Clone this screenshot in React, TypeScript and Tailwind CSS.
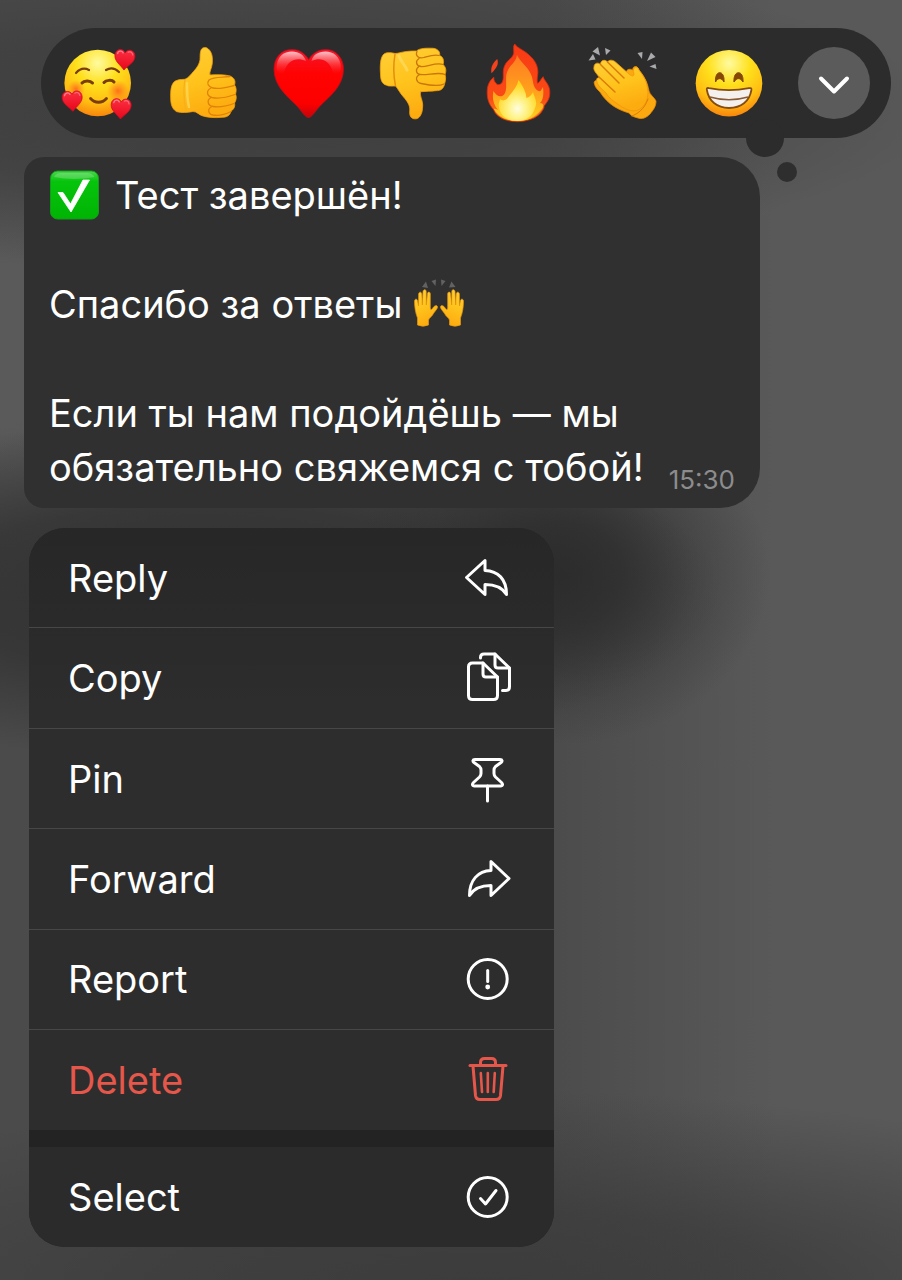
import { useState } from "react";
import type { ReactNode } from "react";
import clsx from "clsx";

const SmallHeart = ({ x, y, rotate = 0 }: { x: number; y: number; rotate?: number }) => (
  <g transform={`translate(${x} ${y}) rotate(${rotate})`}>
    <path
      d="M0 -6C-2 -11 -10 -10 -10 -3C-10 3 -4 6 0 11C4 6 10 3 10 -3C10 -10 2 -11 0 -6Z"
      fill="url(#smallHeart)"
      stroke="#d00c22"
      strokeWidth="0.8"
    />
    <path d="M-7.500 -5C-7 -8 -3.500 -8.500 -2 -6" fill="none" stroke="#ff7f8c" strokeWidth="1.300" strokeLinecap="round" />
    <path d="M3 -7C5 -8.500 7.500 -7 7.800 -4.500" fill="none" stroke="#ff6f7e" strokeWidth="1.100" strokeLinecap="round" />
  </g>
);

// Gradients shared by all the emoji drawings
const EmojiDefs = () => (
  <svg className="absolute size-0" aria-hidden="true">
    <defs>
      <radialGradient id="face" cx="0.5" cy="0.2" r="0.8">
        <stop offset="0" stopColor="#fffba0" />
        <stop offset="0.4" stopColor="#ffe01c" />
        <stop offset="0.75" stopColor="#ffbd12" />
        <stop offset="1" stopColor="#f9850c" />
      </radialGradient>
      <radialGradient id="blush">
        <stop offset="0" stopColor="#ff5a1c" stopOpacity="0.8" />
        <stop offset="1" stopColor="#ff7a1c" stopOpacity="0" />
      </radialGradient>
      <linearGradient id="smallHeart" x1="0" y1="0" x2="0" y2="1">
        <stop offset="0" stopColor="#fb2f42" />
        <stop offset="1" stopColor="#e8061a" />
      </linearGradient>
      <linearGradient id="skin" x1="0" y1="0" x2="0.3" y2="1">
        <stop offset="0" stopColor="#ffcf38" />
        <stop offset="0.55" stopColor="#ffc31c" />
        <stop offset="1" stopColor="#fdac10" />
      </linearGradient>
      <linearGradient id="heart" x1="0" y1="0" x2="0" y2="1">
        <stop offset="0" stopColor="#f5152b" />
        <stop offset="0.35" stopColor="#ff0303" />
        <stop offset="0.8" stopColor="#fc0000" />
        <stop offset="1" stopColor="#c4040a" />
      </linearGradient>
      <linearGradient id="heartShine" x1="0" y1="0" x2="0" y2="1">
        <stop offset="0" stopColor="#fff" stopOpacity="0.75" />
        <stop offset="1" stopColor="#ff4040" stopOpacity="0" />
      </linearGradient>
      <linearGradient id="flame" x1="0" y1="0" x2="0" y2="1">
        <stop offset="0" stopColor="#f93a14" />
        <stop offset="0.7" stopColor="#f84b16" />
        <stop offset="1" stopColor="#fb8f1c" />
      </linearGradient>
      <linearGradient id="flameMid" x1="0" y1="0" x2="0" y2="1">
        <stop offset="0" stopColor="#ff7a22" />
        <stop offset="0.6" stopColor="#ffa51c" />
        <stop offset="1" stopColor="#ffd321" />
      </linearGradient>
      <radialGradient id="flameCore" cx="0.5" cy="0.7" r="0.6">
        <stop offset="0" stopColor="#fffde0" />
        <stop offset="0.4" stopColor="#fff389" />
        <stop offset="1" stopColor="#ffd51c" />
      </radialGradient>
      <linearGradient id="checkBox" x1="0" y1="0" x2="0" y2="1">
        <stop offset="0" stopColor="#4ad64c" />
        <stop offset="0.22" stopColor="#06c40c" />
        <stop offset="1" stopColor="#00b404" />
      </linearGradient>
    </defs>
  </svg>
);

const Adored = () => (
  <>
    <circle cx="35.700" cy="40" r="33.300" fill="url(#face)" />
    <circle cx="56" cy="48" r="11" fill="url(#blush)" />
    <circle cx="14" cy="46" r="9" fill="url(#blush)" />
    <g fill="none" stroke="#7a3d06" strokeLinecap="round">
      <path d="M14 30C18 25.500 23 25 27 27" strokeWidth="2.200" />
      <path d="M44 27C48 24.500 53 25 57 29" strokeWidth="2.200" />
      <path d="M20 40C22 37.500 28 37 30.500 40" strokeWidth="3" />
      <path d="M42 39.500C44 37 50 36.500 52 39" strokeWidth="3" />
      <path d="M28.500 55.500C33 60.500 40 60.500 44.500 55.500" strokeWidth="2.800" />
    </g>
    <SmallHeart x={62.7} y={16} rotate={4} />
    <SmallHeart x={10.3} y={57.3} rotate={-3} />
    <SmallHeart x={59} y={65} rotate={3} />
  </>
);

const ThumbUp = () => (
  <>
    <path
      d="M33.500 9C34 5 37 3.800 40 5C44 7.500 46 12 45.300 20C45 25 42 29 43 32C49 31.500 58 31.500 63 33C67 34.500 69 38 67.500 42C69.500 44.500 69.500 48 68.500 51C70 54 69 58 67.500 60C68.500 64 66 67 64 68C63 72.500 60 74.300 55 74.300C48 75 41 74.500 36 73C32 72 30 68.500 26 68.500C21 69.500 14 70 9.700 68.700C5 66 3.700 61 3.700 55C3.500 49 3.700 43 6.500 39.500C9 36.500 14 36.500 18 36.300C22 34.500 24 31 26.300 28.700C30 25 32.300 21 33 17C33.200 13 33 11 33.500 9Z"
      fill="url(#skin)"
      stroke="#f5a00b"
      strokeWidth="0.8"
    />
    <path d="M18 37C16.500 44 16.500 58 19 68" fill="none" stroke="#f7b01c" strokeWidth="1.300" />
    <path d="M20 40C20 48 20 56 22 64" fill="none" stroke="#ffe06a" strokeWidth="2.500" strokeLinecap="round" opacity="0.600" />
    <g fill="none" stroke="#e08208" strokeWidth="1.300" strokeLinecap="round">
      <path d="M63 33.500C55 34.500 46 33.500 42 37C39.500 40 41 44 46 45C53 46.500 61 44 67 42.500" />
      <path d="M44 45C39 47.500 39.500 53 45 54.500C52 56 61 54 68 51.500" />
      <path d="M44 54.500C39.500 57 40.500 62.500 46 63.500C52 64.500 60 63 67 60.500" />
      <path d="M45 63.500C40 66 41 71 46 72C52 73 59 71 64 68.500" />
    </g>
  </>
);

const RedHeart = () => (
  <>
    <path
      d="M36.700 16.500C32 9 26 6.300 19.500 6.500C9 6.700 2 15 2 26C2 43 15 53 25 63C29 67 33 74.500 36.500 74.500C40 74.500 44 67 48 63C58 53 71.500 43 71.500 26C71.500 15 64 6.500 54 6.500C47 6.500 41 9.500 36.700 16.500Z"
      fill="url(#heart)"
      stroke="#b5101c"
      strokeWidth="0.8"
    />
    <path d="M4.500 25C5 13 12 8.500 20 8.500C27 8.500 32 12 34 18C24 14 16 17 12 29C10 33 5 31 4.500 25Z" fill="url(#heartShine)" />
    <path d="M69 25C68.500 13 61 8.500 53.500 8.500C46 8.500 41 12 39.500 18C49 14 57 17 61 29C63 33 68.500 31 69 25Z" fill="url(#heartShine)" />
  </>
);

const ThumbDown = () => (
  <>
    <path
      d="M7 11C9 9 15 9.500 18 10.500C21 10.500 25 9 28 8.700C33 8 36 8 39.700 8C42 5 51 5 56.300 5.300C61 6 63.500 9 62.500 12.500C66 13.500 67.500 18 66 21.500C69 24 69.500 28 68 31.500C69.500 36 68 39 67.300 42C66 46 64 47.700 59 47.700C54 48.500 49 48 43.500 48.700C42.500 53 45.700 57 45.700 62C45.500 67 45 70 43.700 72C42 75.500 39 76.500 36 75.500C33 74.500 32.300 71 32.800 67C33 62 30 58 26.300 53.700C23 50 21 46 18.700 43C15 43 12 43.500 9.700 42.300C4.500 41 3.500 36 3.500 31C3 24 3 14 7 11Z"
      fill="url(#skin)"
      stroke="#f5a00b"
      strokeWidth="0.8"
    />
    <path d="M18 11C16.500 20 16.500 33 18.500 43" fill="none" stroke="#e48f0c" strokeWidth="1.500" />
    <path d="M22 13C24 19 28 22 30 27" fill="none" stroke="#ffe06a" strokeWidth="3" strokeLinecap="round" opacity="0.600" />
    <g fill="none" stroke="#c9770a" strokeWidth="1.300" strokeLinecap="round">
      <path d="M40 8.500C38 13 42 16 47 14.500C52 13 58 11 62 12.500" />
      <path d="M42 15.500C38 18 39 23 44 23.500C50 24 59 19 66 21.500" />
      <path d="M42 23.500C38 26 39 31 43 31.500C50 32.500 62 28.500 68 31.500" />
      <path d="M42 32C38 34 39 39.500 44 40.500C51 42 61 44 67 41" />
    </g>
  </>
);

const Fire = () => (
  <>
    <path
      d="M31.800 1C34 5 41 7 46 12C53 18 56 25 54.500 33C54.200 36 54 38 54.500 40.300C57 39.500 57.500 36 60.200 33.700C61 38 66.800 41 66.800 49C67 56 64 59 61 63C61.500 65 60 66.500 58.500 69C54 75.500 43 78.700 34.200 78.700C23 78.700 13 74 10.500 66.500C5.500 61 4 55 4.200 48.700C4.200 42 7 37 10.800 34.300C10.500 38 12.500 40 14.200 41.500C17 42 19 41 20 37C21 32 19 28 22 22C24.500 16.500 31 14.500 30.800 9C30.800 6 30 3 31.800 1Z"
      fill="url(#flame)"
      stroke="#d72a12"
      strokeWidth="0.8"
    />
    <path d="M14.200 16C16 21 14 24.500 8.500 30.300C7.500 25.500 9 20.500 14.200 16Z" fill="#f4431c" />
    <path
      d="M34 12C37 19 46 24 49 34C50.500 40 50 44 54.500 47.500C58 50 58.500 46 60 44C61 52 60 57 57 60C61 60 61.500 64 58 67C52 75 43 78 34.200 78C24 78 16 74 11.500 67C9 65 13 66 15 67C10 61 9 54 10.500 48C13 53 19 56 22 50C25 43 21 34 25 27C28 21 33 19 34 12Z"
      fill="url(#flameMid)"
    />
    <path
      d="M35.500 37C40 43 43 49 43.500 55C47 54 49 51 50 49C51 54 55 58 52 65C50 73 43 78 34.200 78C25 78 17 73 16 64C15 60 17 58 17 56C20 59 24 57 26 53C30 48 34 44 35.500 37Z"
      fill="url(#flameCore)"
    />
  </>
);

const Clap = () => (
  <>
    <g fill="#a9aaac">
      <path d="M.500 17.500L5 11L7.500 16.500Z" />
      <path d="M4.500 8.500L10 4L12 12.500Z" />
      <path d="M18 12L17 5L22.500 7.500Z" />
      <path d="M54 16L49.500 10L54.500 9Z" />
      <path d="M59 18L63 9.500L67.500 14Z" />
      <path d="M61.500 23.500L67.500 21L68.500 26Z" />
    </g>
    <path
      d="M39 31C37 27 41 25 45 27C44 24 48 22 50 25C51 28 54 30 56 34C59 39 60 43 61 48C62 52 66 54 68 58C68 64 65 67 62 71C58 75 54 76.500 50 75C46 74 43 73 41 70C31 67 20 62 12 49C9 46 7 44 6.500 41C5 38 9 36 11 38Z"
      fill="#fba90e"
      stroke="#e58a08"
      strokeWidth="0.8"
    />
    <path
      d="M6 24C6 20 10 19 12.500 21.500C12.500 17 17 16 19.500 19C21 16.500 25 16.500 28 19.500L41.500 31.500C44 33 45.500 34 46 31C44 26 47 22.500 50 25C51 28 53 29 55 33C59 39 59 43 60 49C60 57 57 63 51 66.500C45 69.500 38 67 31 62C25 58 21 55 18 50C14 46 10 43 9 39C8 36 9 34 12 35C8 30 5 27 6 24Z"
      fill="url(#skin)"
      stroke="#f0960c"
      strokeWidth="0.8"
    />
    <g fill="none" stroke="#dc7c08" strokeWidth="1.500" strokeLinecap="round">
      <path d="M12.500 21.500L31 40" />
      <path d="M19.500 19L36 35" />
      <path d="M11 34L27 49" />
      <path d="M44 73C49 71 56 67 60 56" strokeWidth="1" />
    </g>
  </>
);

const Grin = () => (
  <>
    <circle cx="36" cy="40.300" r="33.300" fill="url(#face)" />
    <path d="M22.500 39C21.500 26.500 32 26.500 31 39C28.500 34.500 25 34.500 22.500 39Z" fill="#874807" stroke="#874807" strokeLinejoin="round" />
    <path d="M41 39C40 26.500 51 26.500 50 39C47.500 34.500 43.500 34.500 41 39Z" fill="#874807" stroke="#874807" strokeLinejoin="round" />
    <path
      d="M13.800 46.500C13.500 45 14.500 44.800 16 45.200C29 47.800 43 47.800 56 45.200C58 44.800 58.700 45.200 58.400 47C56.500 58.500 48 65 36 65C24 65 15.500 58 13.800 46.500Z"
      fill="#f4f0ee"
      stroke="#874c10"
      strokeWidth="1.800"
    />
    <path d="M17 54C29 57.500 43 57.500 55 54" fill="none" stroke="#8b5a35" strokeWidth="1.600" />
  </>
);

const CheckBoxEmoji = () => (
  <svg viewBox="0 0 50 50" className="size-[50px] shrink-0" role="img" aria-label="Done">
    <rect x="1.500" y="1" width="48" height="48" rx="7" fill="url(#checkBox)" stroke="#109d17" />
    <path d="M5 7Q7 3 12 3H38Q43 3 45.500 7Q25 11 5 7Z" fill="#fff" opacity="0.200" />
    <path d="M9 22.500H14L21.500 34L34 10H40.500L22 42Z" fill="#fff" stroke="#fff" strokeWidth="0.8" strokeLinejoin="round" />
  </svg>
);

const Palm = () => (
  <path
    d="M3.500 46V39C1.500 34 .5 28 .5 22C.8 19.500 3.300 19.500 3.600 22L4.500 27L4.600 15C5 12.500 7.500 12.500 7.800 15L8.300 26L9 12.500C9.500 10 12 10 12.200 12.500L12.300 26L13.500 14.500C14 12.300 16.300 12.800 16.300 15V29C16.500 31 17.500 31 18.500 29.500C20 27 22.500 25.500 23.500 27.500C24 29.500 21 32 19.500 34.500C18 37.500 15.500 38.500 14.500 41V46Q9 48.500 3.500 46Z"
    fill="url(#skin)"
    stroke="#e5930e"
    strokeWidth="0.7"
  />
);

const RaisedHands = () => (
  <svg viewBox="0 0 50 50" className="size-[50px] shrink-0" role="img" aria-label="Raised hands">
    <g fill="#626264">
      <path d="M8 8L12 2.500L14 9Z" />
      <path d="M17.500 2L22 .5L21.500 7Z" />
      <path d="M27 .5L31.500 2L27.500 7Z" />
      <path d="M37.500 2.500L41.500 8L35 8.500Z" />
    </g>
    <Palm />
    <g transform="matrix(-1 0 0 1 50 0)">
      <Palm />
    </g>
  </svg>
);

const reactions: { label: string; art: ReactNode }[] = [
  { label: "Smiling face with hearts", art: <Adored /> },
  { label: "Thumbs up", art: <ThumbUp /> },
  { label: "Red heart", art: <RedHeart /> },
  { label: "Thumbs down", art: <ThumbDown /> },
  { label: "Fire", art: <Fire /> },
  { label: "Clapping hands", art: <Clap /> },
  { label: "Beaming face", art: <Grin /> },
];

const menuItems: { label: string; danger?: boolean; icon: ReactNode }[] = [
  {
    label: "Reply",
    icon: <path d="M2.500 23.500L21 6.500V16.500C34 17 42.500 25 42.500 40.500C38 33 31 30.500 21 30.500V40.500Z" />,
  },
  {
    label: "Copy",
    icon: (
      <>
        <path d="M8.500 9H19L33.500 23V41.500Q33.500 45.500 29.500 45.500H8.500Q4.500 45.500 4.500 41.500V13Q4.500 9 8.500 9Z" />
        <path d="M19 9V20Q19 23 22 23H33.500" />
        <path d="M16.500 4V3.500Q16.500 0 20 0H31L45.500 14V32.500Q45.500 36.500 42 36.500H38.500" />
        <path d="M31 0V11Q31 14 34 14H45.500" />
      </>
    ),
  },
  {
    label: "Pin",
    icon: (
      <>
        <path d="M11 4.500H36C38.500 4.500 38.500 6.500 37 7.500L31.500 11.500Q30 13 30 15V18.500Q30 20.500 31.500 22L37.500 27.500C39 29 39 31 36.500 31H10.500C8 31 8 29 9.500 27.500L15.500 22Q17 20.500 17 18.500V15Q17 13 15.500 11.500L10 7.500C8.500 6.500 8.500 4.500 11 4.500Z" />
        <path d="M23.500 31V46" />
      </>
    ),
  },
  {
    label: "Forward",
    icon: <path d="M45 23.500L27 6.500V15.500C14 16 5.500 25 5.500 40.500C10 33 17 30.500 27 30.500V40.500Z" />,
  },
  {
    label: "Report",
    icon: (
      <>
        <circle cx="23.700" cy="24" r="19.500" />
        <path d="M23.700 15.500V26.500" />
        <circle cx="23.700" cy="32" r="2.400" fill="currentColor" stroke="none" />
      </>
    ),
  },
  {
    label: "Delete",
    danger: true,
    icon: (
      <>
        <path d="M6 9.500H42" />
        <path d="M16.500 9V6.500Q16.500 2.500 20.500 2.500H27.500Q31.500 2.500 31.500 6.500V9" />
        <path d="M9 10L11.500 39.500Q12 43.500 16 43.500H32Q36 43.500 36.500 39.500L39 10" />
        <path d="M16.800 17L18 36M23.800 17V36M30.800 17L29.700 36" strokeWidth="2.600" />
      </>
    ),
  },
];

const selectIcon = (
  <>
    <circle cx="23.700" cy="24" r="19.500" />
    <path d="M16.500 25.500L21.500 31L32 17.500" />
  </>
);

function MenuRow({ label, icon, danger }: { label: string; icon: ReactNode; danger?: boolean }) {
  return (
    <button
      className={clsx(
        "flex w-full min-h-[100px] flex-1 items-center justify-between pl-[39px] pr-[42px] text-left text-[38px] leading-[54px]",
        danger ? "text-[#e5574a]" : "text-white"
      )}
    >
      <span>{label}</span>
      <svg
        viewBox="0 0 48 48"
        className="size-12 overflow-visible"
        fill="none"
        stroke="currentColor"
        strokeWidth="3"
        strokeLinecap="round"
        strokeLinejoin="round"
        aria-hidden="true"
      >
        {icon}
      </svg>
    </button>
  );
}

export default function App() {
  const [picked, setPicked] = useState<string | null>(null);

  return (
    <main className="min-h-screen bg-[#4b4b4b] bg-[radial-gradient(ellipse_210px_170px_at_560px_575px,#2c2c2c_0%,#2c2c2ccc_30%,#2c2c2c55_65%,transparent_100%),radial-gradient(ellipse_520px_170px_at_200px_590px,#323232_0%,#323232cc_50%,transparent_100%),radial-gradient(ellipse_740px_160px_at_200px_110px,#403f40_0%,#403f40cc_45%,#403f4055_75%,transparent_100%),radial-gradient(ellipse_800px_200px_at_480px_1290px,#3c3c3c_0%,#3c3c3ccc_40%,transparent_100%),radial-gradient(ellipse_200px_280px_at_0px_340px,#5a5a5a_30%,transparent_100%),linear-gradient(to_right,transparent_60%,#595959_86%)] pb-8 pl-6 pr-[11px] pt-7 font-['Inter',sans-serif] text-white">
      <EmojiDefs />

      <div className="relative z-10 ml-[17px] flex h-[110px] items-center justify-between rounded-full bg-[#2c2c2d] px-[21px]">
        {reactions.map((r) => (
          <button key={r.label} aria-label={r.label} aria-pressed={picked === r.label} onClick={() => setPicked(r.label)}>
            <svg viewBox="0 0 72 80" className="h-20 w-[72px] overflow-visible">
              {r.art}
            </svg>
          </button>
        ))}
        <button aria-label="More reactions" className="flex size-[72px] items-center justify-center rounded-full bg-[#5b5b5c]">
          <svg viewBox="0 0 36 24" className="h-6 w-9" fill="none" stroke="#fff" strokeWidth="4" strokeLinecap="round" strokeLinejoin="round">
            <path d="M5 7.500L18 20.500L31 7.500" />
          </svg>
        </button>
        {/* bubble tail */}
        <span className="absolute right-[107px] top-[91px] -z-10 size-[38px] rounded-full bg-[#2c2c2d]" />
        <span className="absolute right-[94px] top-[134px] size-5 rounded-full bg-[#2e2e2f]" />
      </div>

      <article className="mt-[19px] flex w-[736px] max-w-full items-end justify-between rounded-l-[20px] rounded-r-[40px] bg-[#303030] px-[25px] pb-[14px] pt-[11px]">
        <div className="text-[38px] leading-[54px]">
          <p className="flex items-center gap-4">
            <CheckBoxEmoji />
            Тест завершён!
          </p>
          <p className="mt-[55px] flex items-center gap-3">
            Спасибо за ответы
            <RaisedHands />
          </p>
          <p className="mt-[55px]">
            Если ты нам подойдёшь — мы
            <br />
            обязательно свяжемся с тобой!
          </p>
        </div>
        <time className="text-[26px] leading-7 text-[#8c8c8d]">15:30</time>
      </article>

      <nav className="ml-[5px] mt-5 w-[525px] max-w-full overflow-hidden rounded-[36px] bg-[#232323]">
        <div className="flex min-h-[602px] flex-col divide-y divide-[#474747] bg-linear-to-b from-[#272727] to-[#2d2d2d] to-30%">
          {menuItems.map((item) => (
            <MenuRow key={item.label} {...item} />
          ))}
        </div>
        <div className="mt-[17px] flex bg-[#2b2b2b]">
          <MenuRow label="Select" icon={selectIcon} />
        </div>
      </nav>
    </main>
  );
}
